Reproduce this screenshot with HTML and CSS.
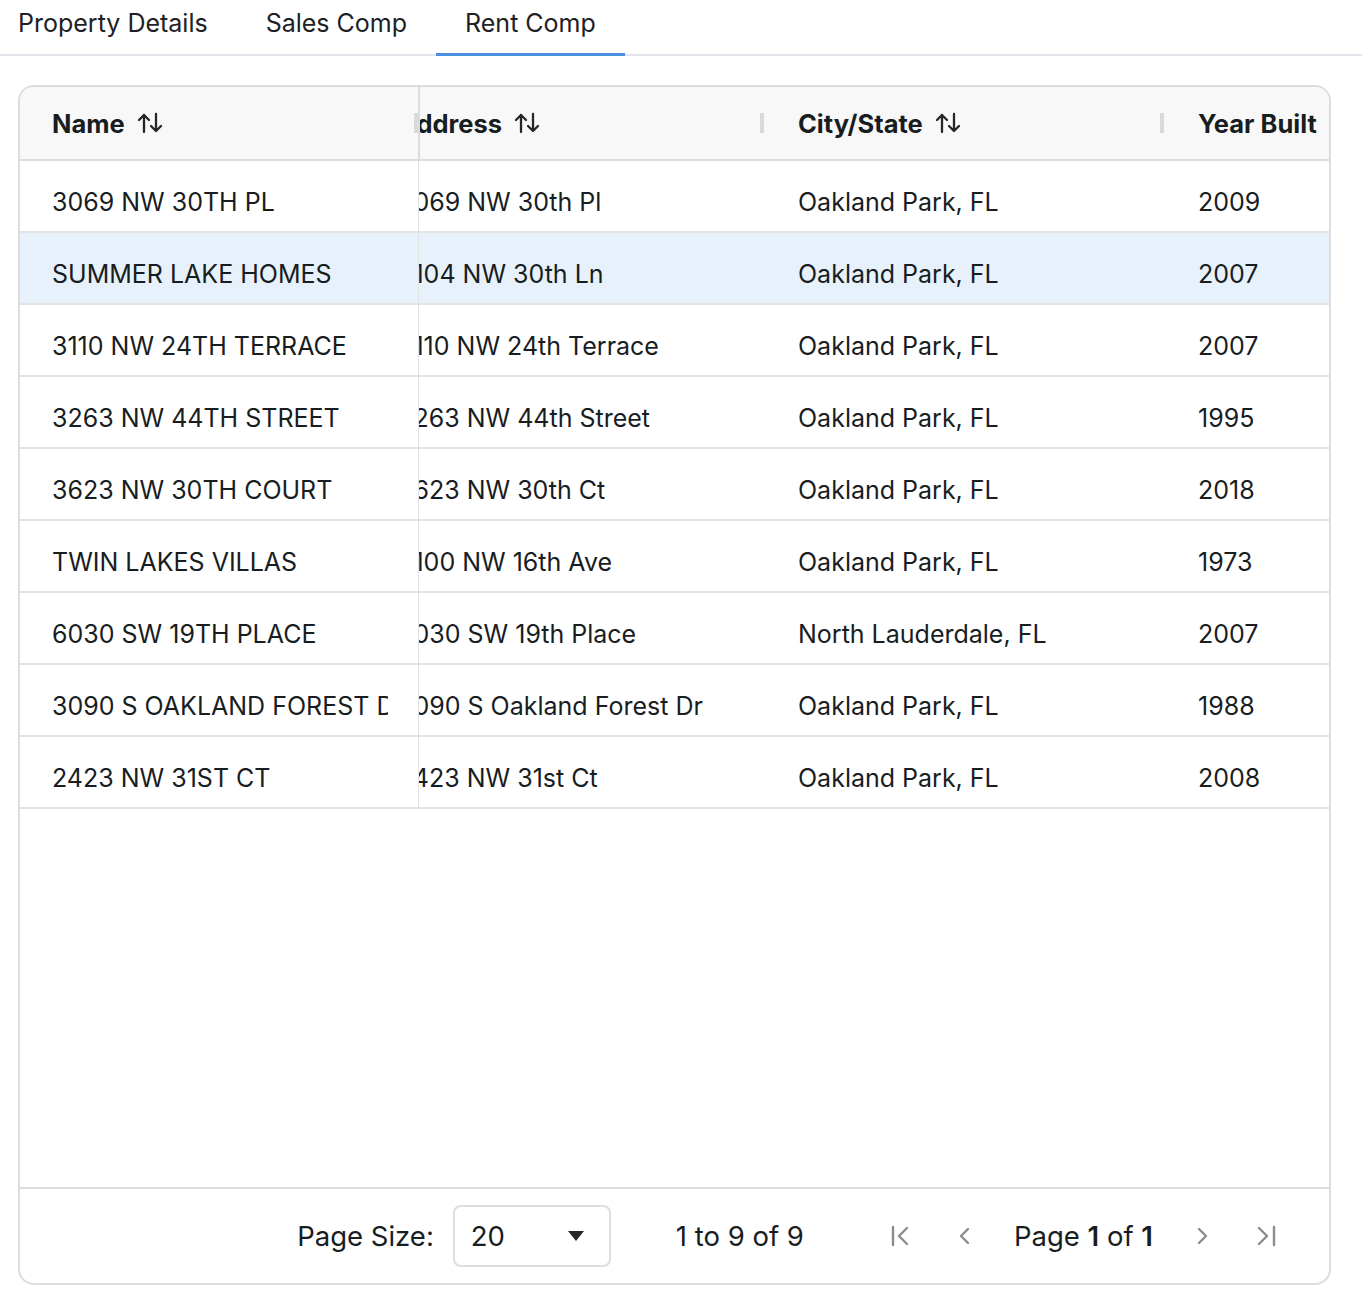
FILE: index.html
```html
<!DOCTYPE html>
<html lang="en">
<head>
<meta charset="utf-8">
<title>Rent Comp</title>
<link rel="stylesheet" href="styles.css">
</head>
<body>
<nav class="tabs">
  <div class="tab">Property Details</div>
  <div class="tab">Sales Comp</div>
  <div class="tab active">Rent Comp</div>
</nav>

<section class="grid">
  <div class="hrow">
    <div class="pinned hcell">
      <span class="htext">Name</span>
      <svg class="sort" viewBox="0 0 26 22" width="26" height="22"><path d="M7 20V3M2 8l5-5 5 5M19 2v17M14 14l5 5 5-5" fill="none" stroke="#23272a" stroke-width="2.3" stroke-linecap="round" stroke-linejoin="round"/></svg>
      <span class="handle"></span>
    </div>
    <div class="viewport">
      <div class="strip">
        <div class="col hcell">
          <span class="htext">Address</span>
          <svg class="sort" viewBox="0 0 26 22" width="26" height="22"><path d="M7 20V3M2 8l5-5 5 5M19 2v17M14 14l5 5 5-5" fill="none" stroke="#23272a" stroke-width="2.3" stroke-linecap="round" stroke-linejoin="round"/></svg>
          <span class="handle"></span>
        </div>
        <div class="col hcell">
          <span class="htext">City/State</span>
          <svg class="sort" viewBox="0 0 26 22" width="26" height="22"><path d="M7 20V3M2 8l5-5 5 5M19 2v17M14 14l5 5 5-5" fill="none" stroke="#23272a" stroke-width="2.3" stroke-linecap="round" stroke-linejoin="round"/></svg>
          <span class="handle"></span>
        </div>
        <div class="col hcell">
          <span class="htext">Year Built</span>
        </div>
      </div>
    </div>
  </div>

  <div class="body">
    <div class="row">
      <div class="pinned cell"><span class="txt">3069 NW 30TH PL</span></div>
      <div class="viewport"><div class="strip">
        <div class="col cell"><span class="txt">3069 NW 30th Pl</span></div>
        <div class="col cell"><span class="txt">Oakland Park, FL</span></div>
        <div class="col cell"><span class="txt">2009</span></div>
      </div></div>
    </div>
    <div class="row selected">
      <div class="pinned cell"><span class="txt">SUMMER LAKE HOMES</span></div>
      <div class="viewport"><div class="strip">
        <div class="col cell"><span class="txt">3104 NW 30th Ln</span></div>
        <div class="col cell"><span class="txt">Oakland Park, FL</span></div>
        <div class="col cell"><span class="txt">2007</span></div>
      </div></div>
    </div>
    <div class="row">
      <div class="pinned cell"><span class="txt">3110 NW 24TH TERRACE</span></div>
      <div class="viewport"><div class="strip">
        <div class="col cell"><span class="txt">3110 NW 24th Terrace</span></div>
        <div class="col cell"><span class="txt">Oakland Park, FL</span></div>
        <div class="col cell"><span class="txt">2007</span></div>
      </div></div>
    </div>
    <div class="row">
      <div class="pinned cell"><span class="txt">3263 NW 44TH STREET</span></div>
      <div class="viewport"><div class="strip">
        <div class="col cell"><span class="txt">3263 NW 44th Street</span></div>
        <div class="col cell"><span class="txt">Oakland Park, FL</span></div>
        <div class="col cell"><span class="txt">1995</span></div>
      </div></div>
    </div>
    <div class="row">
      <div class="pinned cell"><span class="txt">3623 NW 30TH COURT</span></div>
      <div class="viewport"><div class="strip">
        <div class="col cell"><span class="txt">3623 NW 30th Ct</span></div>
        <div class="col cell"><span class="txt">Oakland Park, FL</span></div>
        <div class="col cell"><span class="txt">2018</span></div>
      </div></div>
    </div>
    <div class="row">
      <div class="pinned cell"><span class="txt">TWIN LAKES VILLAS</span></div>
      <div class="viewport"><div class="strip">
        <div class="col cell"><span class="txt">3100 NW 16th Ave</span></div>
        <div class="col cell"><span class="txt">Oakland Park, FL</span></div>
        <div class="col cell"><span class="txt">1973</span></div>
      </div></div>
    </div>
    <div class="row">
      <div class="pinned cell"><span class="txt">6030 SW 19TH PLACE</span></div>
      <div class="viewport"><div class="strip">
        <div class="col cell"><span class="txt">6030 SW 19th Place</span></div>
        <div class="col cell"><span class="txt">North Lauderdale, FL</span></div>
        <div class="col cell"><span class="txt">2007</span></div>
      </div></div>
    </div>
    <div class="row">
      <div class="pinned cell"><span class="txt">3090 S OAKLAND FOREST DR</span></div>
      <div class="viewport"><div class="strip">
        <div class="col cell"><span class="txt">3090 S Oakland Forest Dr</span></div>
        <div class="col cell"><span class="txt">Oakland Park, FL</span></div>
        <div class="col cell"><span class="txt">1988</span></div>
      </div></div>
    </div>
    <div class="row">
      <div class="pinned cell"><span class="txt">2423 NW 31ST CT</span></div>
      <div class="viewport"><div class="strip">
        <div class="col cell"><span class="txt">2423 NW 31st Ct</span></div>
        <div class="col cell"><span class="txt">Oakland Park, FL</span></div>
        <div class="col cell"><span class="txt">2008</span></div>
      </div></div>
    </div>
  </div>

  <footer class="paging">
    <span class="label">Page Size:</span>
    <div class="select">
      <span>20</span>
      <svg width="16" height="10" viewBox="0 0 16 10"><path d="M0 0h16L8 10z" fill="#23272a"/></svg>
    </div>
    <span class="summary">1 to 9 of 9</span>
    <svg class="pbtn first" width="24" height="24" viewBox="0 0 24 24"><path d="M4 3v18M18 4l-8 8 8 8" fill="none" stroke="#8c8c8c" stroke-width="2.4" stroke-linecap="round" stroke-linejoin="round"/></svg>
    <svg class="pbtn prev" width="24" height="24" viewBox="0 0 24 24"><path d="M15 5l-7 7 7 7" fill="none" stroke="#8c8c8c" stroke-width="2.4" stroke-linecap="round" stroke-linejoin="round"/></svg>
    <span class="pages">Page <b>1</b> of <b>1</b></span>
    <svg class="pbtn next" width="24" height="24" viewBox="0 0 24 24"><path d="M9 5l7 7-7 7" fill="none" stroke="#8c8c8c" stroke-width="2.4" stroke-linecap="round" stroke-linejoin="round"/></svg>
    <svg class="pbtn last" width="24" height="24" viewBox="0 0 24 24"><path d="M4 4l8 8-8 8M19 3v18" fill="none" stroke="#8c8c8c" stroke-width="2.4" stroke-linecap="round" stroke-linejoin="round"/></svg>
  </footer>
</section>
</body>
</html>
```

FILE: styles.css
```css
* { box-sizing: border-box; }

html, body {
  margin: 0;
  padding: 0;
  background: #ffffff;
}

body {
  font-family: Inter, "Noto Sans", "Liberation Sans", sans-serif;
  color: #181d1f;
  width: 1362px;
  height: 1312px;
  overflow: hidden;
}

/* Tabs */
.tabs {
  display: flex;
  height: 56px;
  border-bottom: 2px solid #e2e5ea;
}

.tab {
  padding: 0 29px 7px;
  height: 56px;
  display: flex;
  align-items: center;
  font-size: 25px;
  color: #1d2125;
  margin-bottom: -2px;
  border-bottom: 3px solid transparent;
}

.tab:first-child {
  padding-left: 18px;
}

.tab.active {
  border-bottom-color: #4a8fe0;
}

/* Grid */
.grid {
  margin: 29px 31px 0 18px;
  height: 1200px;
  border: 2px solid #dddddd;
  border-radius: 16px;
  display: flex;
  flex-direction: column;
  overflow: hidden;
}

.hrow {
  display: flex;
  height: 74px;
  flex: none;
  background: #f8f8f8;
  border-bottom: 2px solid #dddddd;
}

.pinned {
  flex: none;
  width: 400px;
  border-right: 2px solid #e0e0e0;
  padding-left: 32px;
}

.hrow .pinned {
  border-right-color: #dcdcdc;
}

.hrow .pinned .handle {
  margin-right: 0;
}

.viewport {
  flex: 1;
  overflow: hidden;
  min-width: 0;
}

.strip {
  display: flex;
  margin-left: -54px;
  height: 100%;
}

.col {
  flex: none;
  width: 400px;
  padding-left: 32px;
}

.hcell {
  display: flex;
  align-items: center;
  font-size: 25.5px;
  font-weight: 700;
  color: #181d1f;
  white-space: nowrap;
}

.sort {
  margin-left: 12px;
  flex: none;
}

.handle {
  margin-left: auto;
  margin-right: 2px;
  width: 4px;
  height: 20px;
  background: #dadada;
  flex: none;
}

.body {
  flex: 1;
  background: #ffffff;
}

.row {
  display: flex;
  height: 72px;
  border-bottom: 2px solid #e3e3e3;
}

.row.selected {
  background: #e7f1fb;
}

.cell {
  display: flex;
  align-items: center;
  padding-top: 11px;
  padding-right: 30px;
  font-size: 25px;
  white-space: nowrap;
}

.txt {
  display: block;
  overflow: hidden;
  white-space: nowrap;
  min-width: 0;
}

.row .pinned {
  border-right: 1px solid #e2e2e2;
  width: 399px;
}

.row .strip {
  margin-left: -53px;
}

/* Paging */
.paging {
  flex: none;
  height: 96px;
  border-top: 2px solid #dddddd;
  display: flex;
  align-items: center;
  justify-content: flex-end;
  padding-right: 50px;
  font-size: 27.5px;
  color: #181d1f;
}

.label {
  margin-right: 19px;
}

.select {
  width: 158px;
  height: 62px;
  border: 2px solid #dddddd;
  border-radius: 8px;
  display: flex;
  align-items: center;
  justify-content: space-between;
  padding: 0 25px 0 16px;
}

.summary {
  margin-left: 65px;
}

.pbtn {
  flex: none;
}

.first { margin-left: 85px; }
.prev { margin-left: 40px; }
.pages { margin-left: 37px; }
.pages b { font-weight: 600; }
.next { margin-left: 37px; }
.last { margin-left: 41px; }
```
